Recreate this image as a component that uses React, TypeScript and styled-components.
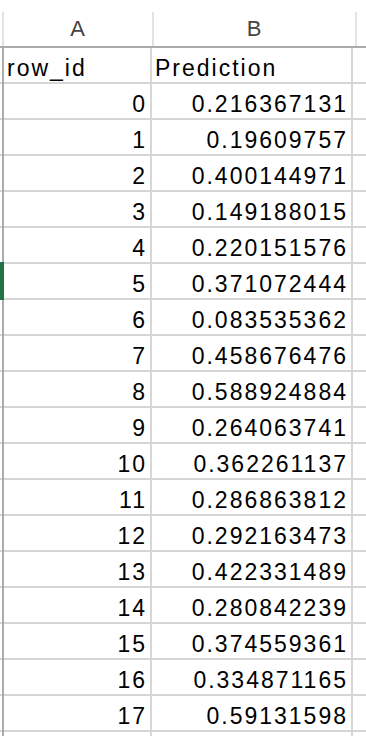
import styled, { createGlobalStyle } from "styled-components";

const rows: [number, string][] = [
    [0, "0.216367131"],
    [1, "0.19609757"],
    [2, "0.400144971"],
    [3, "0.149188015"],
    [4, "0.220151576"],
    [5, "0.371072444"],
    [6, "0.083535362"],
    [7, "0.458676476"],
    [8, "0.588924884"],
    [9, "0.264063741"],
    [10, "0.362261137"],
    [11, "0.286863812"],
    [12, "0.292163473"],
    [13, "0.422331489"],
    [14, "0.280842239"],
    [15, "0.374559361"],
    [16, "0.334871165"],
    [17, "0.59131598"],
];

const selectedRow = 5;

export default function App() {
    return <>
        <GlobalStyle />
        <Sheet>
            <HeaderRow>
                <Gutter $header />
                <ColHead $width={148}>A</ColHead>
                <ColHead $width={201}>B</ColHead>
                <Rest />
            </HeaderRow>
            <Row>
                <Gutter />
                <Cell $width={148}>row_id</Cell>
                <Cell $width={201}>Prediction</Cell>
                <Rest />
            </Row>
            {rows.map(([id, value]) => (
                <Row key={id}>
                    <Gutter $active={id === selectedRow} />
                    <Cell $width={148} $num>{id}</Cell>
                    <Cell $width={201} $num>{value}</Cell>
                    <Rest />
                </Row>
            ))}
            <Row>
                <Gutter />
                <Cell $width={148}></Cell>
                <Cell $width={201}></Cell>
                <Rest />
            </Row>
        </Sheet>
    </>
}

const GlobalStyle = createGlobalStyle`
html, body {
    margin: 0;
    padding: 0;
    background: #fff;
    overflow: hidden;
}
body {
    font-family: "Liberation Sans", Arial, sans-serif;
}
`

const Sheet = styled.div`
display: flex;
flex-direction: column;
padding-top: 12px;
width: 366px;
`

const HeaderRow = styled.div`
display: flex;
height: 36px;
box-sizing: border-box;
border-bottom: 2px solid #ababab;
`

const Row = styled.div`
display: flex;
height: 36px;
flex: none;
box-sizing: border-box;
border-bottom: 2px solid #d6d6d6;
`

const Gutter = styled.div<{ $header?: boolean; $active?: boolean }>`
position: relative;
flex: none;
width: 4px;
margin-bottom: ${p => p.$header ? "0" : "-2px"};
background: linear-gradient(to right, transparent 2px, ${p => p.$header ? "#e3e3e3" : "#ababab"} 2px);
${p => p.$active && `
    &::before {
        content: "";
        position: absolute;
        left: 0;
        right: 0;
        top: -2px;
        bottom: 0;
        background: #217346;
    }
`}
`

const ColHead = styled.div<{ $width: number }>`
flex: none;
width: ${p => p.$width}px;
border-right: 2px solid #e3e3e3;
display: flex;
align-items: center;
justify-content: center;
font-size: 22px;
color: #444;
letter-spacing: 1px;
`

const Cell = styled.div<{ $width: number; $num?: boolean }>`
flex: none;
width: ${p => p.$width}px;
box-sizing: border-box;
border-right: 2px solid #d6d6d6;
display: flex;
align-items: flex-end;
justify-content: ${p => p.$num ? "flex-end" : "flex-start"};
padding: 0 ${p => p.$num ? "3px" : "0"} 1px ${p => p.$num ? "0" : "3px"};
font-size: 23px;
line-height: 26px;
letter-spacing: 2px;
color: #000;
white-space: nowrap;
overflow: hidden;
`

const Rest = styled.div`
flex: 1;
`
